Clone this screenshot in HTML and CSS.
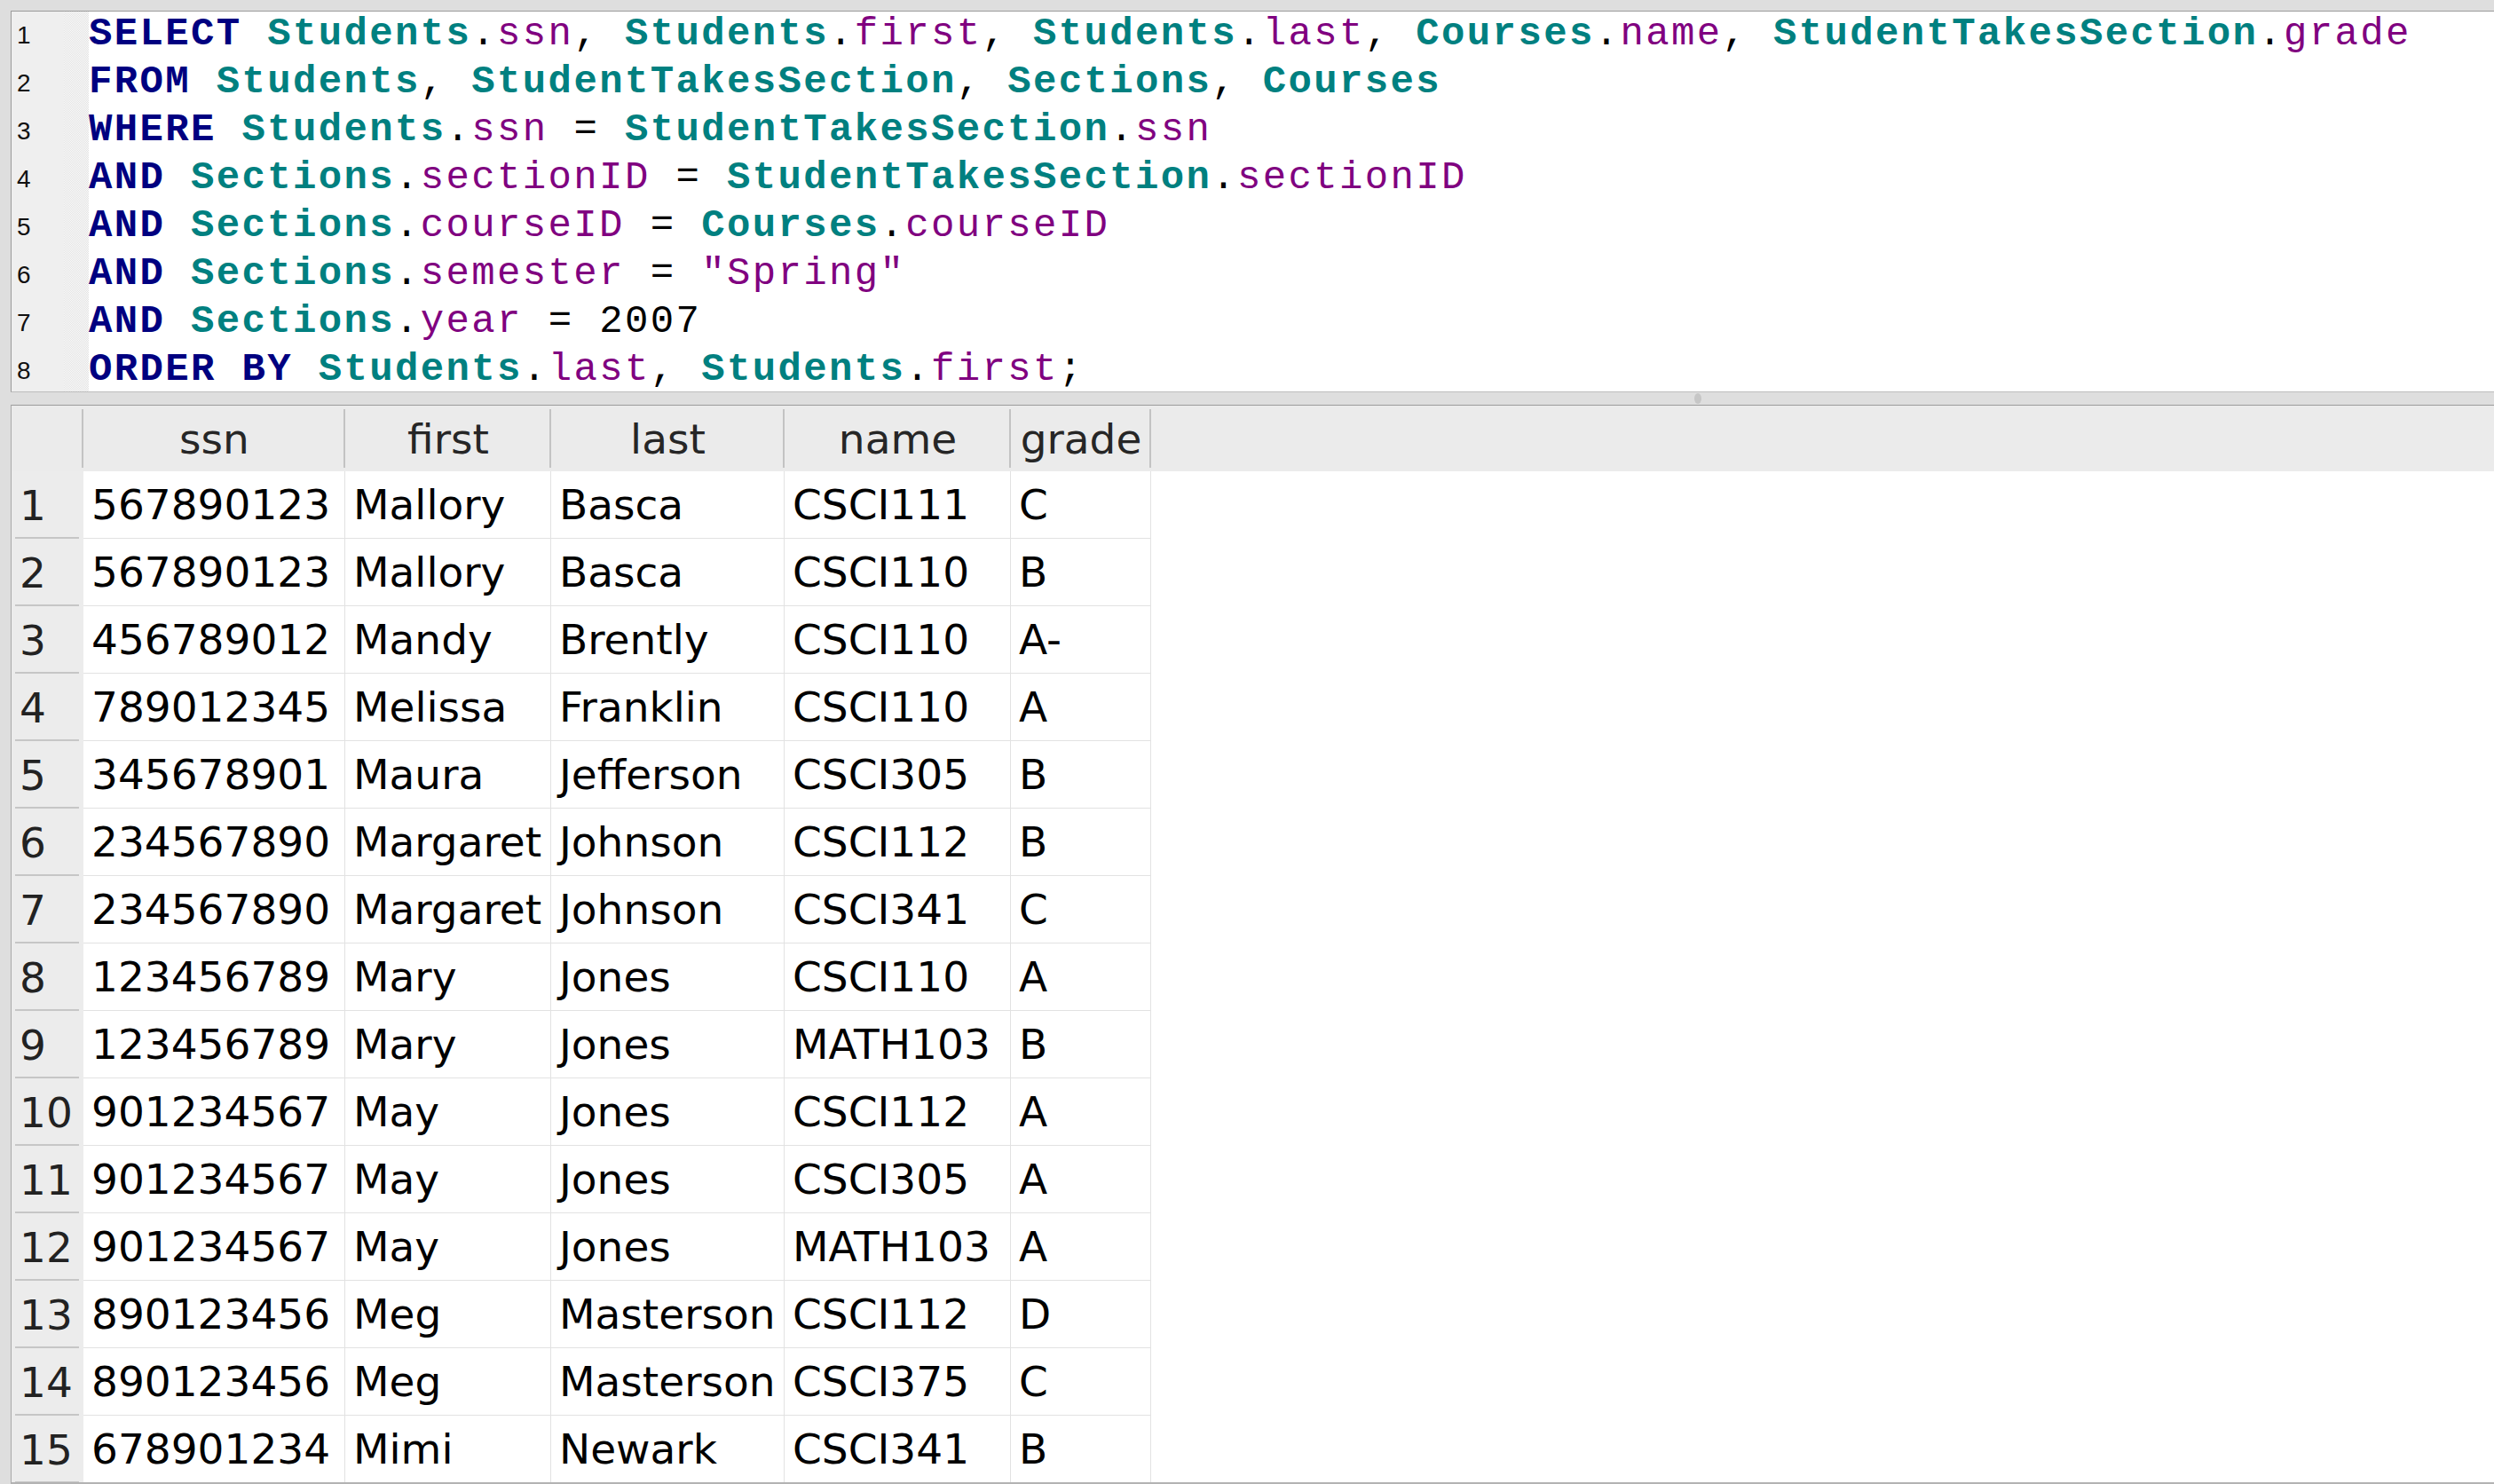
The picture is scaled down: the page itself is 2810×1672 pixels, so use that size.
FILE: index.html
```html
<!DOCTYPE html>
<html lang="en">
<head>
<meta charset="utf-8">
<title>SQL Query Results</title>
<link rel="stylesheet" href="styles.css">
</head>
<body>
<div class="app">
  <div class="editor">
    <div class="line"><div class="ln">1</div><div class="strip"></div><div class="code"><span class="kw">SELECT</span> <span class="tb">Students</span>.<span class="col">ssn</span>, <span class="tb">Students</span>.<span class="col">first</span>, <span class="tb">Students</span>.<span class="col">last</span>, <span class="tb">Courses</span>.<span class="col">name</span>, <span class="tb">StudentTakesSection</span>.<span class="col">grade</span></div></div>
    <div class="line"><div class="ln">2</div><div class="strip"></div><div class="code"><span class="kw">FROM</span> <span class="tb">Students</span>, <span class="tb">StudentTakesSection</span>, <span class="tb">Sections</span>, <span class="tb">Courses</span></div></div>
    <div class="line"><div class="ln">3</div><div class="strip"></div><div class="code"><span class="kw">WHERE</span> <span class="tb">Students</span>.<span class="col">ssn</span> = <span class="tb">StudentTakesSection</span>.<span class="col">ssn</span></div></div>
    <div class="line"><div class="ln">4</div><div class="strip"></div><div class="code"><span class="kw">AND</span> <span class="tb">Sections</span>.<span class="col">sectionID</span> = <span class="tb">StudentTakesSection</span>.<span class="col">sectionID</span></div></div>
    <div class="line"><div class="ln">5</div><div class="strip"></div><div class="code"><span class="kw">AND</span> <span class="tb">Sections</span>.<span class="col">courseID</span> = <span class="tb">Courses</span>.<span class="col">courseID</span></div></div>
    <div class="line"><div class="ln">6</div><div class="strip"></div><div class="code"><span class="kw">AND</span> <span class="tb">Sections</span>.<span class="col">semester</span> = <span class="str">"Spring"</span></div></div>
    <div class="line"><div class="ln">7</div><div class="strip"></div><div class="code"><span class="kw">AND</span> <span class="tb">Sections</span>.<span class="col">year</span> = 2007</div></div>
    <div class="line"><div class="ln">8</div><div class="strip"></div><div class="code"><span class="kw">ORDER BY</span> <span class="tb">Students</span>.<span class="col">last</span>, <span class="tb">Students</span>.<span class="col">first</span>;</div></div>
  </div>
  <div class="splitter"><span class="grip"></span></div>
  <div class="results">
    <div class="hrow">
      <div class="hcell"></div>
      <div class="hcell">ssn</div>
      <div class="hcell">first</div>
      <div class="hcell">last</div>
      <div class="hcell">name</div>
      <div class="hcell">grade</div>
      <div class="hfill"></div>
    </div>
    <div class="drow"><div class="rn">1</div><div class="cell">567890123</div><div class="cell">Mallory</div><div class="cell">Basca</div><div class="cell">CSCI111</div><div class="cell">C</div><div></div></div>
    <div class="drow"><div class="rn">2</div><div class="cell">567890123</div><div class="cell">Mallory</div><div class="cell">Basca</div><div class="cell">CSCI110</div><div class="cell">B</div><div></div></div>
    <div class="drow"><div class="rn">3</div><div class="cell">456789012</div><div class="cell">Mandy</div><div class="cell">Brently</div><div class="cell">CSCI110</div><div class="cell">A-</div><div></div></div>
    <div class="drow"><div class="rn">4</div><div class="cell">789012345</div><div class="cell">Melissa</div><div class="cell">Franklin</div><div class="cell">CSCI110</div><div class="cell">A</div><div></div></div>
    <div class="drow"><div class="rn">5</div><div class="cell">345678901</div><div class="cell">Maura</div><div class="cell">Jefferson</div><div class="cell">CSCI305</div><div class="cell">B</div><div></div></div>
    <div class="drow"><div class="rn">6</div><div class="cell">234567890</div><div class="cell">Margaret</div><div class="cell">Johnson</div><div class="cell">CSCI112</div><div class="cell">B</div><div></div></div>
    <div class="drow"><div class="rn">7</div><div class="cell">234567890</div><div class="cell">Margaret</div><div class="cell">Johnson</div><div class="cell">CSCI341</div><div class="cell">C</div><div></div></div>
    <div class="drow"><div class="rn">8</div><div class="cell">123456789</div><div class="cell">Mary</div><div class="cell">Jones</div><div class="cell">CSCI110</div><div class="cell">A</div><div></div></div>
    <div class="drow"><div class="rn">9</div><div class="cell">123456789</div><div class="cell">Mary</div><div class="cell">Jones</div><div class="cell">MATH103</div><div class="cell">B</div><div></div></div>
    <div class="drow"><div class="rn">10</div><div class="cell">901234567</div><div class="cell">May</div><div class="cell">Jones</div><div class="cell">CSCI112</div><div class="cell">A</div><div></div></div>
    <div class="drow"><div class="rn">11</div><div class="cell">901234567</div><div class="cell">May</div><div class="cell">Jones</div><div class="cell">CSCI305</div><div class="cell">A</div><div></div></div>
    <div class="drow"><div class="rn">12</div><div class="cell">901234567</div><div class="cell">May</div><div class="cell">Jones</div><div class="cell">MATH103</div><div class="cell">A</div><div></div></div>
    <div class="drow"><div class="rn">13</div><div class="cell">890123456</div><div class="cell">Meg</div><div class="cell">Masterson</div><div class="cell">CSCI112</div><div class="cell">D</div><div></div></div>
    <div class="drow"><div class="rn">14</div><div class="cell">890123456</div><div class="cell">Meg</div><div class="cell">Masterson</div><div class="cell">CSCI375</div><div class="cell">C</div><div></div></div>
    <div class="drow"><div class="rn">15</div><div class="cell">678901234</div><div class="cell">Mimi</div><div class="cell">Newark</div><div class="cell">CSCI341</div><div class="cell">B</div><div></div></div>
  </div>
</div>
</body>
</html>
```
FILE: styles.css
```css
html, body {
  margin: 0;
  padding: 0;
}
body {
  background: #dedede;
  width: 2810px;
  height: 1672px;
  overflow: hidden;
}
.app {
  box-sizing: border-box;
  height: 1672px;
  padding: 12px 0 0 12px;
  display: flex;
  flex-direction: column;
}

/* ---------- SQL editor ---------- */
.editor {
  flex: none;
  height: 428px;
  overflow: hidden;
  background: #fff;
  border-top: 1px solid #9b9b9b;
  border-left: 1px solid #9b9b9b;
  border-bottom: 1px solid #bdbdbd;
}
.line {
  display: flex;
  height: 54px;
}
.ln {
  flex: none;
  box-sizing: border-box;
  width: 59px;
  height: 54px;
  padding: 0 0 0 6px;
  background: #efefef;
  font: 28px/54px "Liberation Sans", Arial, sans-serif;
  color: #111;
}
.strip {
  flex: none;
  width: 28px;
  background: repeating-conic-gradient(#e2e2e2 0 25%, #fbfbfb 0 50%) 0 0 / 2px 2px;
}
.code {
  white-space: pre;
  font: 44px/50px "Liberation Mono", "Courier New", monospace;
  letter-spacing: 2.35px;
  color: #000;
}
.kw {
  color: #000080;
  font-weight: bold;
}
.tb {
  color: #008080;
  font-weight: bold;
}
.col, .str {
  color: #800080;
}

/* ---------- splitter ---------- */
.splitter {
  flex: none;
  height: 14px;
  display: flex;
  align-items: center;
}
.grip {
  margin-left: 1897px;
  width: 8px;
  height: 12px;
  border-radius: 50%;
  background: #c6c6c6;
}

/* ---------- result table ---------- */
.results {
  flex: 1;
  min-height: 0;
  overflow: hidden;
  background: #fff;
  border-top: 1px solid #9b9b9b;
  border-left: 1px solid #a9a9a9;
  border-bottom: 2px solid #b3b3b3;
  font: 47px "DejaVu Sans", "Liberation Sans", sans-serif;
}
.hrow, .drow {
  display: grid;
  grid-template-columns: 81px 295px 232px 263px 255px 158px 1fr;
}
.hrow {
  height: 74px;
  background: #ebebeb;
}
.hcell {
  display: flex;
  align-items: center;
  justify-content: center;
  color: #262626;
  background: linear-gradient(#c3c3c3, #c3c3c3) right center / 2px 66px no-repeat;
}
.drow {
  height: 76px;
}
.rn {
  box-sizing: border-box;
  display: flex;
  align-items: center;
  padding: 0 0 0 9px;
  color: #222;
  background: #ececec linear-gradient(#c6c6c6, #c6c6c6) 4px 100% / 72px 2px no-repeat;
}
.cell {
  box-sizing: border-box;
  display: flex;
  align-items: center;
  padding: 0 0 0 9px;
  color: #000;
  border-right: 1px solid #e2e2e2;
  border-bottom: 1px solid #e2e2e2;
  white-space: nowrap;
  overflow: hidden;
}
```
